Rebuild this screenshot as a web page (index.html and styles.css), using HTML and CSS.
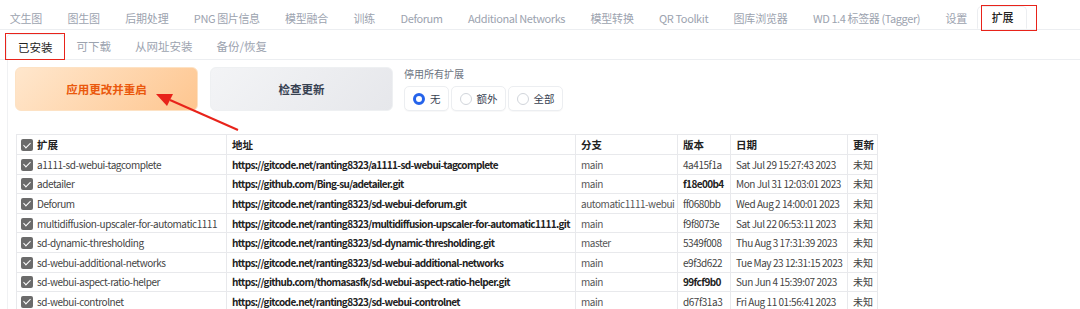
FILE: index.html
```html
<!DOCTYPE html>
<html lang="zh">
<head>
<meta charset="utf-8">
<link rel="stylesheet" href="styles.css">
</head>
<body>
<div class="page">
  <nav class="top-tabs">
    <span class="tab">文生图</span>
    <span class="tab">图生图</span>
    <span class="tab">后期处理</span>
    <span class="tab lat">PNG 图片信息</span>
    <span class="tab">模型融合</span>
    <span class="tab">训练</span>
    <span class="tab lat">Deforum</span>
    <span class="tab lat">Additional Networks</span>
    <span class="tab">模型转换</span>
    <span class="tab lat">QR Toolkit</span>
    <span class="tab">图库浏览器</span>
    <span class="tab lat">WD 1.4 标签器 (Tagger)</span>
    <span class="tab">设置</span>
    <span class="tab active">扩展</span>
  </nav>
  <nav class="sub-tabs">
    <span class="tab active">已安装</span>
    <span class="tab">可下载</span>
    <span class="tab">从网址安装</span>
    <span class="tab">备份/恢复</span>
  </nav>
  <section class="panel">
    <div class="actions">
      <button class="btn btn-primary">应用更改并重启</button>
      <button class="btn btn-secondary">检查更新</button>
      <div class="radio-group">
        <div class="radio-label">停用所有扩展</div>
        <div class="radios">
          <label class="radio"><span class="dot checked"></span>无</label>
          <label class="radio"><span class="dot"></span>额外</label>
          <label class="radio"><span class="dot"></span>全部</label>
        </div>
      </div>
    </div>
    <table class="ext-table">
      <colgroup>
        <col class="c1"><col class="c2"><col class="c3"><col class="c4"><col class="c5"><col class="c6">
      </colgroup>
      <thead>
        <tr><th><span class="cb"></span>扩展</th><th>地址</th><th>分支</th><th>版本</th><th>日期</th><th>更新</th></tr>
      </thead>
      <tbody>
        <tr><td><span class="cb"></span>a1111-sd-webui-tagcomplete</td><td class="url">https://gitcode.net/ranting8323/a1111-sd-webui-tagcomplete</td><td class="br">main</td><td>4a415f1a</td><td>Sat Jul 29 15:27:43 2023</td><td class="up">未知</td></tr>
        <tr><td><span class="cb"></span>adetailer</td><td class="url">https://github.com/Bing-su/adetailer.git</td><td class="br">main</td><td class="b">f18e00b4</td><td>Mon Jul 31 12:03:01 2023</td><td class="up">未知</td></tr>
        <tr><td><span class="cb"></span>Deforum</td><td class="url">https://gitcode.net/ranting8323/sd-webui-deforum.git</td><td class="br">automatic1111-webui</td><td>ff0680bb</td><td>Wed Aug 2 14:00:01 2023</td><td class="up">未知</td></tr>
        <tr><td><span class="cb"></span>multidiffusion-upscaler-for-automatic1111</td><td class="url">https://gitcode.net/ranting8323/multidiffusion-upscaler-for-automatic1111.git</td><td class="br">main</td><td>f9f8073e</td><td>Sat Jul 22 06:53:11 2023</td><td class="up">未知</td></tr>
        <tr><td><span class="cb"></span>sd-dynamic-thresholding</td><td class="url">https://gitcode.net/ranting8323/sd-dynamic-thresholding.git</td><td class="br">master</td><td>5349f008</td><td>Thu Aug 3 17:31:39 2023</td><td class="up">未知</td></tr>
        <tr><td><span class="cb"></span>sd-webui-additional-networks</td><td class="url">https://gitcode.net/ranting8323/sd-webui-additional-networks</td><td class="br">main</td><td>e9f3d622</td><td>Tue May 23 12:31:15 2023</td><td class="up">未知</td></tr>
        <tr><td><span class="cb"></span>sd-webui-aspect-ratio-helper</td><td class="url">https://github.com/thomasasfk/sd-webui-aspect-ratio-helper.git</td><td class="br">main</td><td class="b">99fcf9b0</td><td>Sun Jun 4 15:39:07 2023</td><td class="up">未知</td></tr>
        <tr><td><span class="cb"></span>sd-webui-controlnet</td><td class="url">https://gitcode.net/ranting8323/sd-webui-controlnet</td><td class="br">main</td><td>d67f31a3</td><td>Fri Aug 11 01:56:41 2023</td><td class="up">未知</td></tr>
      </tbody>
    </table>
  </section>
  <div class="mark mark-top"></div>
  <div class="mark mark-sub"></div>
  <svg class="arrow" width="1080" height="309" viewBox="0 0 1080 309">
    <line x1="238" y1="130" x2="170" y2="100" stroke="#e8231a" stroke-width="2"/>
    <polygon points="156,94 173,94 167,106" fill="#e8231a"/>
  </svg>
</div>
</body>
</html>
```
FILE: styles.css
```css
* { box-sizing: border-box; }
html, body { margin: 0; padding: 0; background: #fff; }
body {
  font-family: "Noto Sans CJK SC", "Noto Sans", sans-serif;
  color: #374151;
  width: 1080px;
  height: 309px;
  overflow: hidden;
}
.page { position: relative; }

.top-tabs {
  display: flex;
  height: 30px;
  border-bottom: 1px solid #eceef1;
  margin-left: -3px;
  padding-top: 7px;
}
.top-tabs .tab {
  font-size: 11px;
  letter-spacing: -0.2px;
  color: #9ca3af;
  padding: 0 12.7px;
  line-height: 22px;
  white-space: nowrap;
}
.top-tabs .tab.lat { letter-spacing: -0.4px; }
.top-tabs .tab.active {
  color: #222;
  font-weight: 500;
  background: #fff;
  border: 1px solid #eceef1;
  border-bottom-color: #fff;
  border-radius: 5px 5px 0 0;
  height: 23px;
  line-height: 21px;
  margin-left: -3px;
  margin-top: -1px;
  padding: 0 13px 0 14px;
}

.sub-tabs {
  display: flex;
  height: 30px;
  padding: 4px 0 0 6px;
  border-bottom: 1px solid #eceef1;
}
.sub-tabs .tab {
  font-size: 11.5px;
  color: #9ca3af;
  padding: 0 12px;
  line-height: 25px;
  white-space: nowrap;
}
.sub-tabs .tab.active {
  color: #222;
  border: 1px solid #eceef1;
  border-bottom-color: #fff;
  border-radius: 5px 5px 0 0;
  background: #fff;
  height: 26px;
  line-height: 25px;
  padding: 0 11px;
}

.panel {
  margin-left: 7px;
  border-left: 1px solid #f0f1f3;
  padding: 7px 0 0 7px;
}
.actions {
  display: flex;
  align-items: flex-start;
  gap: 12px;
}
.btn {
  width: 183px;
  height: 44px;
  border-radius: 6px;
  border: 1px solid #eef0f2;
  font-family: inherit;
  font-size: 11.5px;
  font-weight: 700;
}
.btn-primary {
  color: #ea580c;
  background: linear-gradient(135deg, #ffe7cd 0%, #fec690 100%);
  border-color: #fde2c4;
}
.btn-secondary {
  color: #374151;
  background: linear-gradient(135deg, #f3f4f6 0%, #e6e7eb 100%);
}
.radio-group { margin-left: -1px; }
.radio-label {
  font-size: 10px;
  color: #6b7280;
  line-height: 14px;
}
.radios {
  display: flex;
  gap: 2px;
  margin-top: 5px;
}
.radio {
  display: flex;
  align-items: center;
  gap: 5px;
  height: 25px;
  padding: 0 7px 0 8px;
  border: 1px solid #eceef1;
  border-radius: 5px;
  font-size: 10.5px;
  color: #374151;
  background: #fff;
  box-shadow: 0 1px 1px rgba(0,0,0,0.03);
}
.dot {
  width: 12px;
  height: 12px;
  border-radius: 50%;
  border: 1px solid #d1d5db;
  background: #fff;
}
.dot.checked {
  border: 3.5px solid #2563eb;
  background: #fff;
}

.ext-table {
  margin-top: 23px;
  margin-left: 1px;
  border-collapse: collapse;
  table-layout: fixed;
  width: 861px;
  font-size: 10px;
  letter-spacing: -0.45px;
  color: #444;
}
.c1 { width: 210px; }
.c2 { width: 349px; }
.c3 { width: 102px; }
.c4 { width: 53px; }
.c5 { width: 117px; }
.c6 { width: 30px; }
.ext-table th, .ext-table td {
  border: 1px solid #e8e9ec;
  text-align: left;
  white-space: nowrap;
  overflow: hidden;
  padding: 0 5px;
  height: 19.6px;
  line-height: 17px;
}
.ext-table td:first-child, .ext-table th:first-child { padding-left: 4px; }
.ext-table th {
  font-weight: 700;
  color: #222;
  font-size: 10.5px;
  letter-spacing: 0;
  height: 20px;
}
.cb {
  display: inline-block;
  width: 12px;
  height: 12px;
  border-radius: 2px;
  background: #6b6b6b;
  vertical-align: -2px;
  margin-right: 4px;
  position: relative;
}
.cb::after {
  content: "";
  position: absolute;
  left: 4px;
  top: 1.5px;
  width: 3px;
  height: 6px;
  border: solid #fff;
  border-width: 0 1.6px 1.6px 0;
  transform: rotate(45deg);
}
.url { font-weight: 700; color: #222; letter-spacing: -0.65px; }
.br { color: #555; }
.b { font-weight: 700; color: #222; letter-spacing: -0.6px; }
.up { font-size: 10px; letter-spacing: 0; color: #444; padding: 0 4px; }

.mark {
  position: absolute;
  border: 1.5px solid #e8231a;
  pointer-events: none;
}
.mark-top { left: 981px; top: 5px; width: 56px; height: 26px; }
.mark-sub { left: 5px; top: 33px; width: 60px; height: 27px; }
.arrow { position: absolute; left: 0; top: 0; pointer-events: none; }
```
